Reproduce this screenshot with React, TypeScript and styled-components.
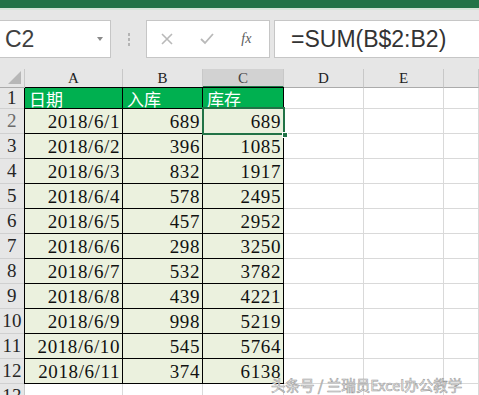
import React from "react";
import styled, { createGlobalStyle } from "styled-components";

const GlobalStyle = createGlobalStyle`
  html, body { margin: 0; padding: 0; background: #ffffff; overflow: hidden; }
  * { box-sizing: border-box; }
  body { font-family: "Liberation Sans", "Noto Sans CJK SC", sans-serif; }
`;

const Window = styled.div`
  position: relative;
  width: 479px;
  height: 395px;
  overflow: hidden;
  background: #ffffff;
`;

const TitleStrip = styled.div`
  height: 10px;
  background: #217346;
  border-bottom: 2px solid #d3e4d7;
`;

const FormulaBar = styled.div`
  display: flex;
  align-items: flex-start;
  height: 59px;
  padding-top: 10px;
  background: #e6e6e6;
`;

const NameBox = styled.div`
  width: 112px;
  height: 38px;
  margin-left: -1px;
  display: flex;
  align-items: center;
  justify-content: space-between;
  padding: 0 7px 0 5px;
  background: #ffffff;
  border: 1px solid #c6c6c6;
  color: #404040;
  font-size: 23px;
`;

const DropArrow = styled.span`
  width: 0;
  height: 0;
  border-left: 3px solid transparent;
  border-right: 3px solid transparent;
  border-top: 4px solid #8a8a8a;
`;

const Grip = styled.div`
  width: 35px;
  height: 38px;
  display: flex;
  flex-direction: column;
  align-items: center;
  justify-content: center;
  gap: 2px;

  span {
    width: 2px;
    height: 3px;
    background: #b4b4b4;
  }
`;

const FuncBox = styled.div`
  width: 124px;
  height: 38px;
  display: flex;
  align-items: center;
  justify-content: space-around;
  background: #ffffff;
  border: 1px solid #c6c6c6;
`;

const FxLabel = styled.span`
  font-family: "Liberation Serif", "DejaVu Serif", serif;
  font-style: italic;
  font-size: 14px;
  color: #5a5a5a;
  width: 14px;
`;

const FormulaInput = styled.div`
  flex: 1;
  height: 38px;
  margin-left: 4px;
  margin-right: -1px;
  display: flex;
  align-items: center;
  padding-left: 16px;
  background: #ffffff;
  border: 1px solid #c6c6c6;
  color: #333333;
  font-size: 23px;
`;

const Sheet = styled.div`
  display: grid;
  grid-template-columns: 25px 98px 80px 81px 80px 80px 1fr;
  grid-template-rows: 19px 21px repeat(12, 25px);
`;

const Corner = styled.div`
  display: flex;
  align-items: flex-end;
  justify-content: flex-end;
  padding: 0 3px 3px 0;
  background: #e6e6e6;
  border-right: 1px solid #c8c8c8;
  border-bottom: 1px solid #ababab;

  span {
    width: 0;
    height: 0;
    border-left: 13px solid transparent;
    border-bottom: 13px solid #b7b7b7;
  }
`;

const ColHead = styled.div<{ $active?: boolean }>`
  display: flex;
  align-items: center;
  justify-content: center;
  padding-top: 1px;
  background: ${p => (p.$active ? "#d2d2d2" : "#e6e6e6")};
  border-right: 1px solid #c8c8c8;
  border-bottom: ${p => (p.$active ? "2px solid #217346" : "1px solid #ababab")};
  color: ${p => (p.$active ? "#444444" : "#222222")};
  font-family: "Liberation Serif", "DejaVu Serif", serif;
  font-size: 15px;
`;

const RowHead = styled.div<{ $active?: boolean }>`
  display: flex;
  align-items: center;
  justify-content: center;
  background: #e6e6e6;
  border-right: 1px solid #c8c8c8;
  border-bottom: 1px solid #d0d0d0;
  color: ${p => (p.$active ? "#6b6b6b" : "#262626")};
  font-family: "Liberation Serif", "DejaVu Serif", serif;
  font-size: 19px;
  letter-spacing: 0.3px;
`;

type Kind = "head" | "data" | "blank";

const Cell = styled.div<{ $kind: Kind; $right?: boolean; $first?: boolean; $top?: boolean }>`
  position: relative;
  display: flex;
  align-items: center;
  justify-content: ${p => (p.$right ? "flex-end" : "flex-start")};
  padding: ${p => (p.$kind === "head" ? "0 0 0 4px" : "2px 2px 0 0")};
  background: ${p => (p.$kind === "head" ? "#00b050" : p.$kind === "data" ? "#ebf1de" : "#ffffff")};
  border-right: 1px solid ${p => (p.$kind === "blank" ? "#d9d9d9" : "#000000")};
  border-bottom: 1px solid ${p => (p.$kind === "blank" ? "#d9d9d9" : "#000000")};
  box-shadow: ${p => [p.$first ? "-1px 0 0 #000000" : "", p.$top ? "0 -1px 0 #000000" : ""].filter(Boolean).join(", ") || "none"};
  color: ${p => (p.$kind === "head" ? "#ffffff" : "#111111")};
  font-family: ${p => (p.$kind === "head" ? `"Noto Sans CJK SC", sans-serif` : `"Liberation Serif", "DejaVu Serif", serif`)};
  font-size: ${p => (p.$kind === "head" ? "17px" : "19px")};
  letter-spacing: ${p => (p.$kind === "data" ? "0.6px" : "0")};
  white-space: nowrap;
`;

const Selection = styled.div`
  position: absolute;
  z-index: 2;
  left: -1px;
  top: -2px;
  right: -2px;
  bottom: -2px;
  border: 2px solid #217346;
  pointer-events: none;
`;

const FillHandle = styled.div`
  position: absolute;
  right: -5px;
  bottom: -5px;
  width: 6px;
  height: 6px;
  background: #217346;
  border: 1px solid #ffffff;
`;

const Watermark = styled.div`
  position: absolute;
  z-index: 3;
  left: 271px;
  top: 374px;
  font-family: "Noto Sans CJK SC", sans-serif;
  font-size: 14.5px;
  color: #f6f6f6;
  -webkit-text-stroke: 0.6px #9e9e9e;
  white-space: nowrap;
`;

const inflow = [689, 396, 832, 578, 457, 298, 532, 439, 998, 545, 374];

const rows = inflow.map((b, i) => ({
  date: `2018/6/${i + 1}`,
  b,
  c: inflow.slice(0, i + 1).reduce((s, v) => s + v, 0),
}));

const cols = ["A", "B", "C", "D", "E", ""];

const XIcon = () => (
  <svg width="12" height="12" viewBox="0 0 12 12">
    <path d="M1 1 L11 11 M11 1 L1 11" stroke="#b9b9b9" strokeWidth="1.6" fill="none" />
  </svg>
);

const CheckIcon = () => (
  <svg width="14" height="12" viewBox="0 0 14 12">
    <path d="M1 6 L5 10 L13 1" stroke="#b9b9b9" strokeWidth="1.8" fill="none" />
  </svg>
);

const Blanks = ({ from }: { from: number }) => (
  <>
    {cols.slice(from).map((c, i) => (
      <Cell key={c + i} $kind="blank" />
    ))}
  </>
);

export default function App() {
  return (
    <Window>
      <GlobalStyle />
      <TitleStrip />
      <FormulaBar>
        <NameBox>
          <span>C2</span>
          <DropArrow />
        </NameBox>
        <Grip>
          <span />
          <span />
          <span />
        </Grip>
        <FuncBox>
          <XIcon />
          <CheckIcon />
          <FxLabel>fx</FxLabel>
        </FuncBox>
        <FormulaInput>=SUM(B$2:B2)</FormulaInput>
      </FormulaBar>

      <Sheet>
        <Corner>
          <span />
        </Corner>
        {cols.map((c, i) => (
          <ColHead key={i} $active={c === "C"}>{c}</ColHead>
        ))}

        <RowHead>1</RowHead>
        <Cell $kind="head" $first $top>日期</Cell>
        <Cell $kind="head" $top>入库</Cell>
        <Cell $kind="head" $top>库存</Cell>
        <Blanks from={3} />

        {rows.map((r, i) => (
          <React.Fragment key={r.date}>
            <RowHead $active={i === 0}>{i + 2}</RowHead>
            <Cell $kind="data" $right $first>{r.date}</Cell>
            <Cell $kind="data" $right>{r.b}</Cell>
            <Cell $kind="data" $right>
              {r.c}
              {i === 0 && (
                <Selection>
                  <FillHandle />
                </Selection>
              )}
            </Cell>
            <Blanks from={3} />
          </React.Fragment>
        ))}

        <RowHead>13</RowHead>
        <Blanks from={0} />
      </Sheet>

      <Watermark>头条号 / 兰瑞员Excel办公教学</Watermark>
    </Window>
  );
}
